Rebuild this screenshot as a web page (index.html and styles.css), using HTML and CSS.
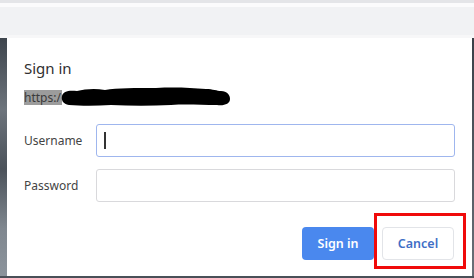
FILE: index.html
```html
<!DOCTYPE html>
<html>
<head>
<meta charset="utf-8">
<link rel="stylesheet" href="styles.css">
</head>
<body>
<div class="chrome">
  <div class="chrome-top"></div>
  <div class="chrome-gap"></div>
  <div class="chrome-bar"></div>
  <div class="chrome-edge"></div>
</div>
<div class="stage">
  <div class="side-left"></div>
  <div class="dialog">
    <h1 class="title">Sign in</h1>
    <div class="origin">
      <span class="sel">https:/</span><svg class="redact" width="170" height="20" viewBox="0 0 170 20"><path d="M1 9 C2 4 8 3 16 4 C24 2 34 1 44 3 C56 1 75 1 95 1 C115 0 130 1 145 2 C152 2 156 4 160 4 C166 4 169 8 169 12 C169 17 163 19 156 18 C140 18 125 17 110 18 C90 19 70 19 50 18 C35 19 20 19 8 18 C2 17 0 13 1 9 Z" fill="#000"/></svg>
    </div>
    <div class="form">
      <label class="label">Username</label>
      <div class="input focused"><span class="caret"></span></div>
      <label class="label">Password</label>
      <div class="input"></div>
    </div>
    <div class="actions">
      <button class="btn primary">Sign in</button>
      <button class="btn secondary">Cancel<span class="mark"></span></button>
    </div>
  </div>
  <div class="side-right"></div>
</div>
<div class="bottom"></div>
</body>
</html>
```
FILE: styles.css
```css
* { box-sizing: border-box; }
html, body { margin: 0; padding: 0; }
body {
  width: 474px;
  height: 278px;
  overflow: hidden;
  background: #5a6068;
  font-family: "Noto Sans", "Open Sans", "Liberation Sans", sans-serif;
}
.chrome { background: #f1f2f4; }
.chrome-top { height: 3px; background: #e4e5e8; }
.chrome-gap { height: 4px; background: #fbfbfc; }
.chrome-bar { height: 28px; background: #f1f2f4; }
.chrome-edge { height: 3px; background: #f7f7f8; }
.stage { display: flex; height: 238px; }
.side-left {
  width: 7px;
  background: linear-gradient(180deg, #3e454d 0%, #6d747c 30%, #4b525a 55%, #7f878f 80%, #8c949c 100%);
}
.side-right {
  width: 2px;
  background: linear-gradient(180deg, #3a4048 0%, #6a7078 100%);
}
.dialog {
  width: 465px;
  background: #fff;
  padding: 19px 17px 0 17px;
  color: #333;
}
.title {
  margin: 0;
  font-size: 15px;
  font-weight: 400;
  line-height: 22px;
  color: #303030;
}
.origin {
  margin-top: 9px;
  height: 18px;
  display: flex;
  align-items: center;
  font-size: 12px;
  color: #3a3a3a;
}
.sel {
  background: #9c9c9c;
  line-height: 15px;
  padding: 0 1px 0 0;
}
.redact { display: block; margin-left: -1px; }
.form {
  margin-top: 18px;
  display: grid;
  grid-template-columns: 72px 359px;
  row-gap: 12px;
  align-items: center;
}
.label {
  font-size: 12px;
  color: #444;
}
.input {
  height: 33px;
  border: 1px solid #d9d9dc;
  border-radius: 3px;
  background: #fff;
  display: flex;
  align-items: center;
}
.input.focused {
  border: 1.5px solid #9fb6ee;
}
.caret {
  display: block;
  width: 2px;
  height: 17px;
  margin-left: 7px;
  background: #333;
}
.actions {
  margin-top: 25px;
  display: flex;
  justify-content: flex-end;
  gap: 8px;
  padding-right: 1px;
}
.btn {
  height: 33px;
  border-radius: 4px;
  font-family: inherit;
  font-size: 12.5px;
  font-weight: 600;
  padding: 0;
  cursor: pointer;
}
.primary {
  width: 72px;
  background: #4a88ee;
  color: #fff;
  border: none;
}
.secondary {
  position: relative;
  width: 72px;
  background: #fff;
  color: #3f6fc6;
  border: 1px solid #e2e4e8;
}
.mark {
  position: absolute;
  left: -9px;
  top: -15px;
  right: -13px;
  bottom: -10px;
  border: 3px solid #f00a0a;
}
.bottom { height: 2px; background: #4a5058; }
```
